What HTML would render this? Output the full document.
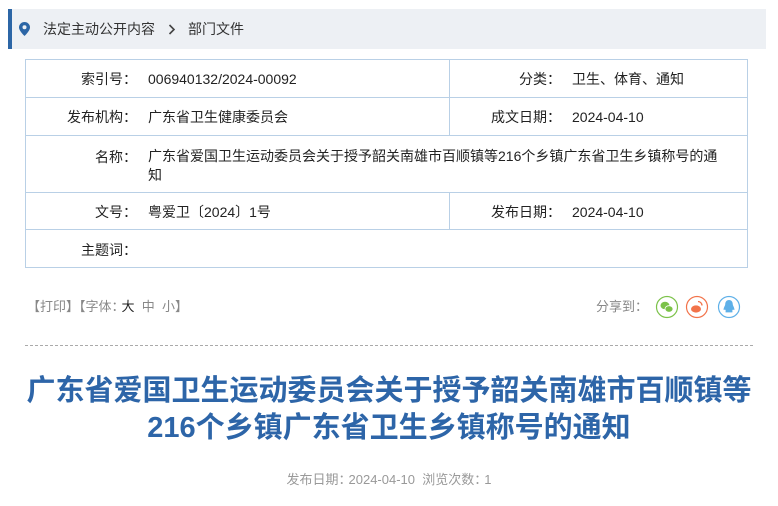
<!DOCTYPE html>
<html><head><meta charset="utf-8"><style>
*{margin:0;padding:0;box-sizing:border-box}
body{width:778px;height:506px;background:#fff;font-family:"Liberation Sans","Noto Sans CJK SC",sans-serif;color:#222;position:relative;overflow:hidden;font-size:14px;line-height:20px}
.a{position:absolute;white-space:nowrap}
.bc{position:absolute;left:8px;top:9px;width:758px;height:40px;background:#edf0f4;border-left:4px solid #2c66a6}
.bc span{position:absolute;top:10px;font-size:14px;color:#333}
.tb{position:absolute;left:25px;top:59px;width:723px;height:209px;border:1px solid #b9d0e6}
.h{position:absolute;left:0;width:721px;border-top:1px solid #b9d0e6}
.v{position:absolute;left:423px;width:0;border-left:1px solid #b9d0e6}
.l{position:absolute;text-align:right;white-space:nowrap;height:20px}
.c{display:inline-block;width:14px;text-align:left;height:20px;vertical-align:top}
.t{position:absolute;white-space:nowrap;height:20px}
.g{color:#888;font-size:13px}
h1{position:absolute;left:0;width:778px;top:373px;text-align:center;font-size:29px;line-height:37px;color:#2d65a8;font-weight:bold}
</style></head><body>
<div class="bc">
<svg style="position:absolute;left:7px;top:13px" width="11" height="14" viewBox="0 0 11 14"><path d="M5.5 0C2.5 0 0 2.4 0 5.4 0 9 5.5 14 5.5 14S11 9 11 5.4C11 2.4 8.5 0 5.5 0z" fill="#2c66a6"/><circle cx="5.5" cy="5.3" r="2" fill="#edf0f4"/></svg>
<span style="left:31px">法定主动公开内容</span>
<svg style="position:absolute;left:156px;top:15px" width="8" height="11" viewBox="0 0 8 11"><path d="M1.5 1l4.5 4.5-4.5 4.5" stroke="#444" stroke-width="1.6" fill="none"/></svg>
<span style="left:176px">部门文件</span>
</div>
<div class="tb">
<div class="h" style="top:37px"></div>
<div class="h" style="top:75px"></div>
<div class="h" style="top:132px"></div>
<div class="h" style="top:169px"></div>
<div class="v" style="top:0;height:37px"></div>
<div class="v" style="top:37px;height:38px"></div>
<div class="v" style="top:132px;height:37px"></div>

<div class="l" style="right:610px;top:9px">索引号<span class="c">：</span></div>
<div class="t" style="left:122px;top:9px">006940132/2024-00092</div>
<div class="l" style="right:186px;top:9px">分类<span class="c">：</span></div>
<div class="t" style="left:546px;top:9px">卫生、体育、通知</div>

<div class="l" style="right:610px;top:47px">发布机构<span class="c">：</span></div>
<div class="t" style="left:122px;top:47px">广东省卫生健康委员会</div>
<div class="l" style="right:186px;top:47px">成文日期<span class="c">：</span></div>
<div class="t" style="left:546px;top:47px">2024-04-10</div>

<div class="l" style="right:610px;top:87px">名称<span class="c">：</span></div>
<div style="position:absolute;left:122px;top:87px;width:592px;line-height:19px;white-space:nowrap">广东省爱国卫生运动委员会关于授予韶关南雄市百顺镇等216个乡镇广东省卫生乡镇称号的通<br>知</div>

<div class="l" style="right:610px;top:142px">文号<span class="c">：</span></div>
<div class="t" style="left:122px;top:142px">粤爱卫〔2024〕1号</div>
<div class="l" style="right:186px;top:142px">发布日期<span class="c">：</span></div>
<div class="t" style="left:546px;top:142px">2024-04-10</div>

<div class="l" style="right:610px;top:180px">主题词<span class="c">：</span></div>
</div>
<div class="a g" style="left:27px;top:297px">【打印】【字体<span class="c" style="width:10px">：</span><span style="color:#222">大</span>&nbsp; 中&nbsp; 小】</div>
<div class="a g" style="left:596px;top:297px">分享到<span class="c">：</span></div>
<svg class="a" style="left:655px;top:295px" width="86" height="24" viewBox="0 0 86 24">
<circle cx="12" cy="12" r="10.5" fill="#fff" stroke="#7cc24a" stroke-width="1.2"/>
<ellipse cx="10" cy="10.5" rx="4.5" ry="3.8" fill="#7cc24a"/><ellipse cx="14" cy="14" rx="4" ry="3.3" fill="#7cc24a" stroke="#fff" stroke-width=".8"/>
<circle cx="42" cy="12" r="10.5" fill="#fff" stroke="#f2734a" stroke-width="1.2"/>
<ellipse cx="41" cy="14" rx="5" ry="3.6" fill="#f2734a"/><path d="M43 6.5a4 4 0 0 1 4 4" stroke="#f2734a" stroke-width="1.3" fill="none"/>
<circle cx="74" cy="12" r="10.5" fill="#fff" stroke="#5eb0e8" stroke-width="1.2"/>
<path d="M74 5c-2.6 0-3.8 2-3.8 4.5 0 1-1.6 3-1.6 5 0 1 .8 .6 1.4-.2.3 1 1 1.8 1 1.8-1 .5-1 1.3.5 1.3h5c1.5 0 1.5-.8.5-1.3 0 0 .7-.8 1-1.8.6.8 1.4 1.2 1.4.2 0-2-1.6-4-1.6-5C77.8 7 76.6 5 74 5z" fill="#5eb0e8"/>
</svg>
<div class="a" style="left:25px;top:345px;width:728px;border-top:1px dashed #aaa"></div>
<h1>广东省爱国卫生运动委员会关于授予韶关南雄市百顺镇等<br>216个乡镇广东省卫生乡镇称号的通知</h1>
<div class="a g" style="left:0;width:778px;text-align:center;top:470px;color:#999">发布日期<span class="c" style="width:10px">：</span>2024-04-10&nbsp;&nbsp;浏览次数<span class="c" style="width:10px">：</span>1</div>
</body></html>
